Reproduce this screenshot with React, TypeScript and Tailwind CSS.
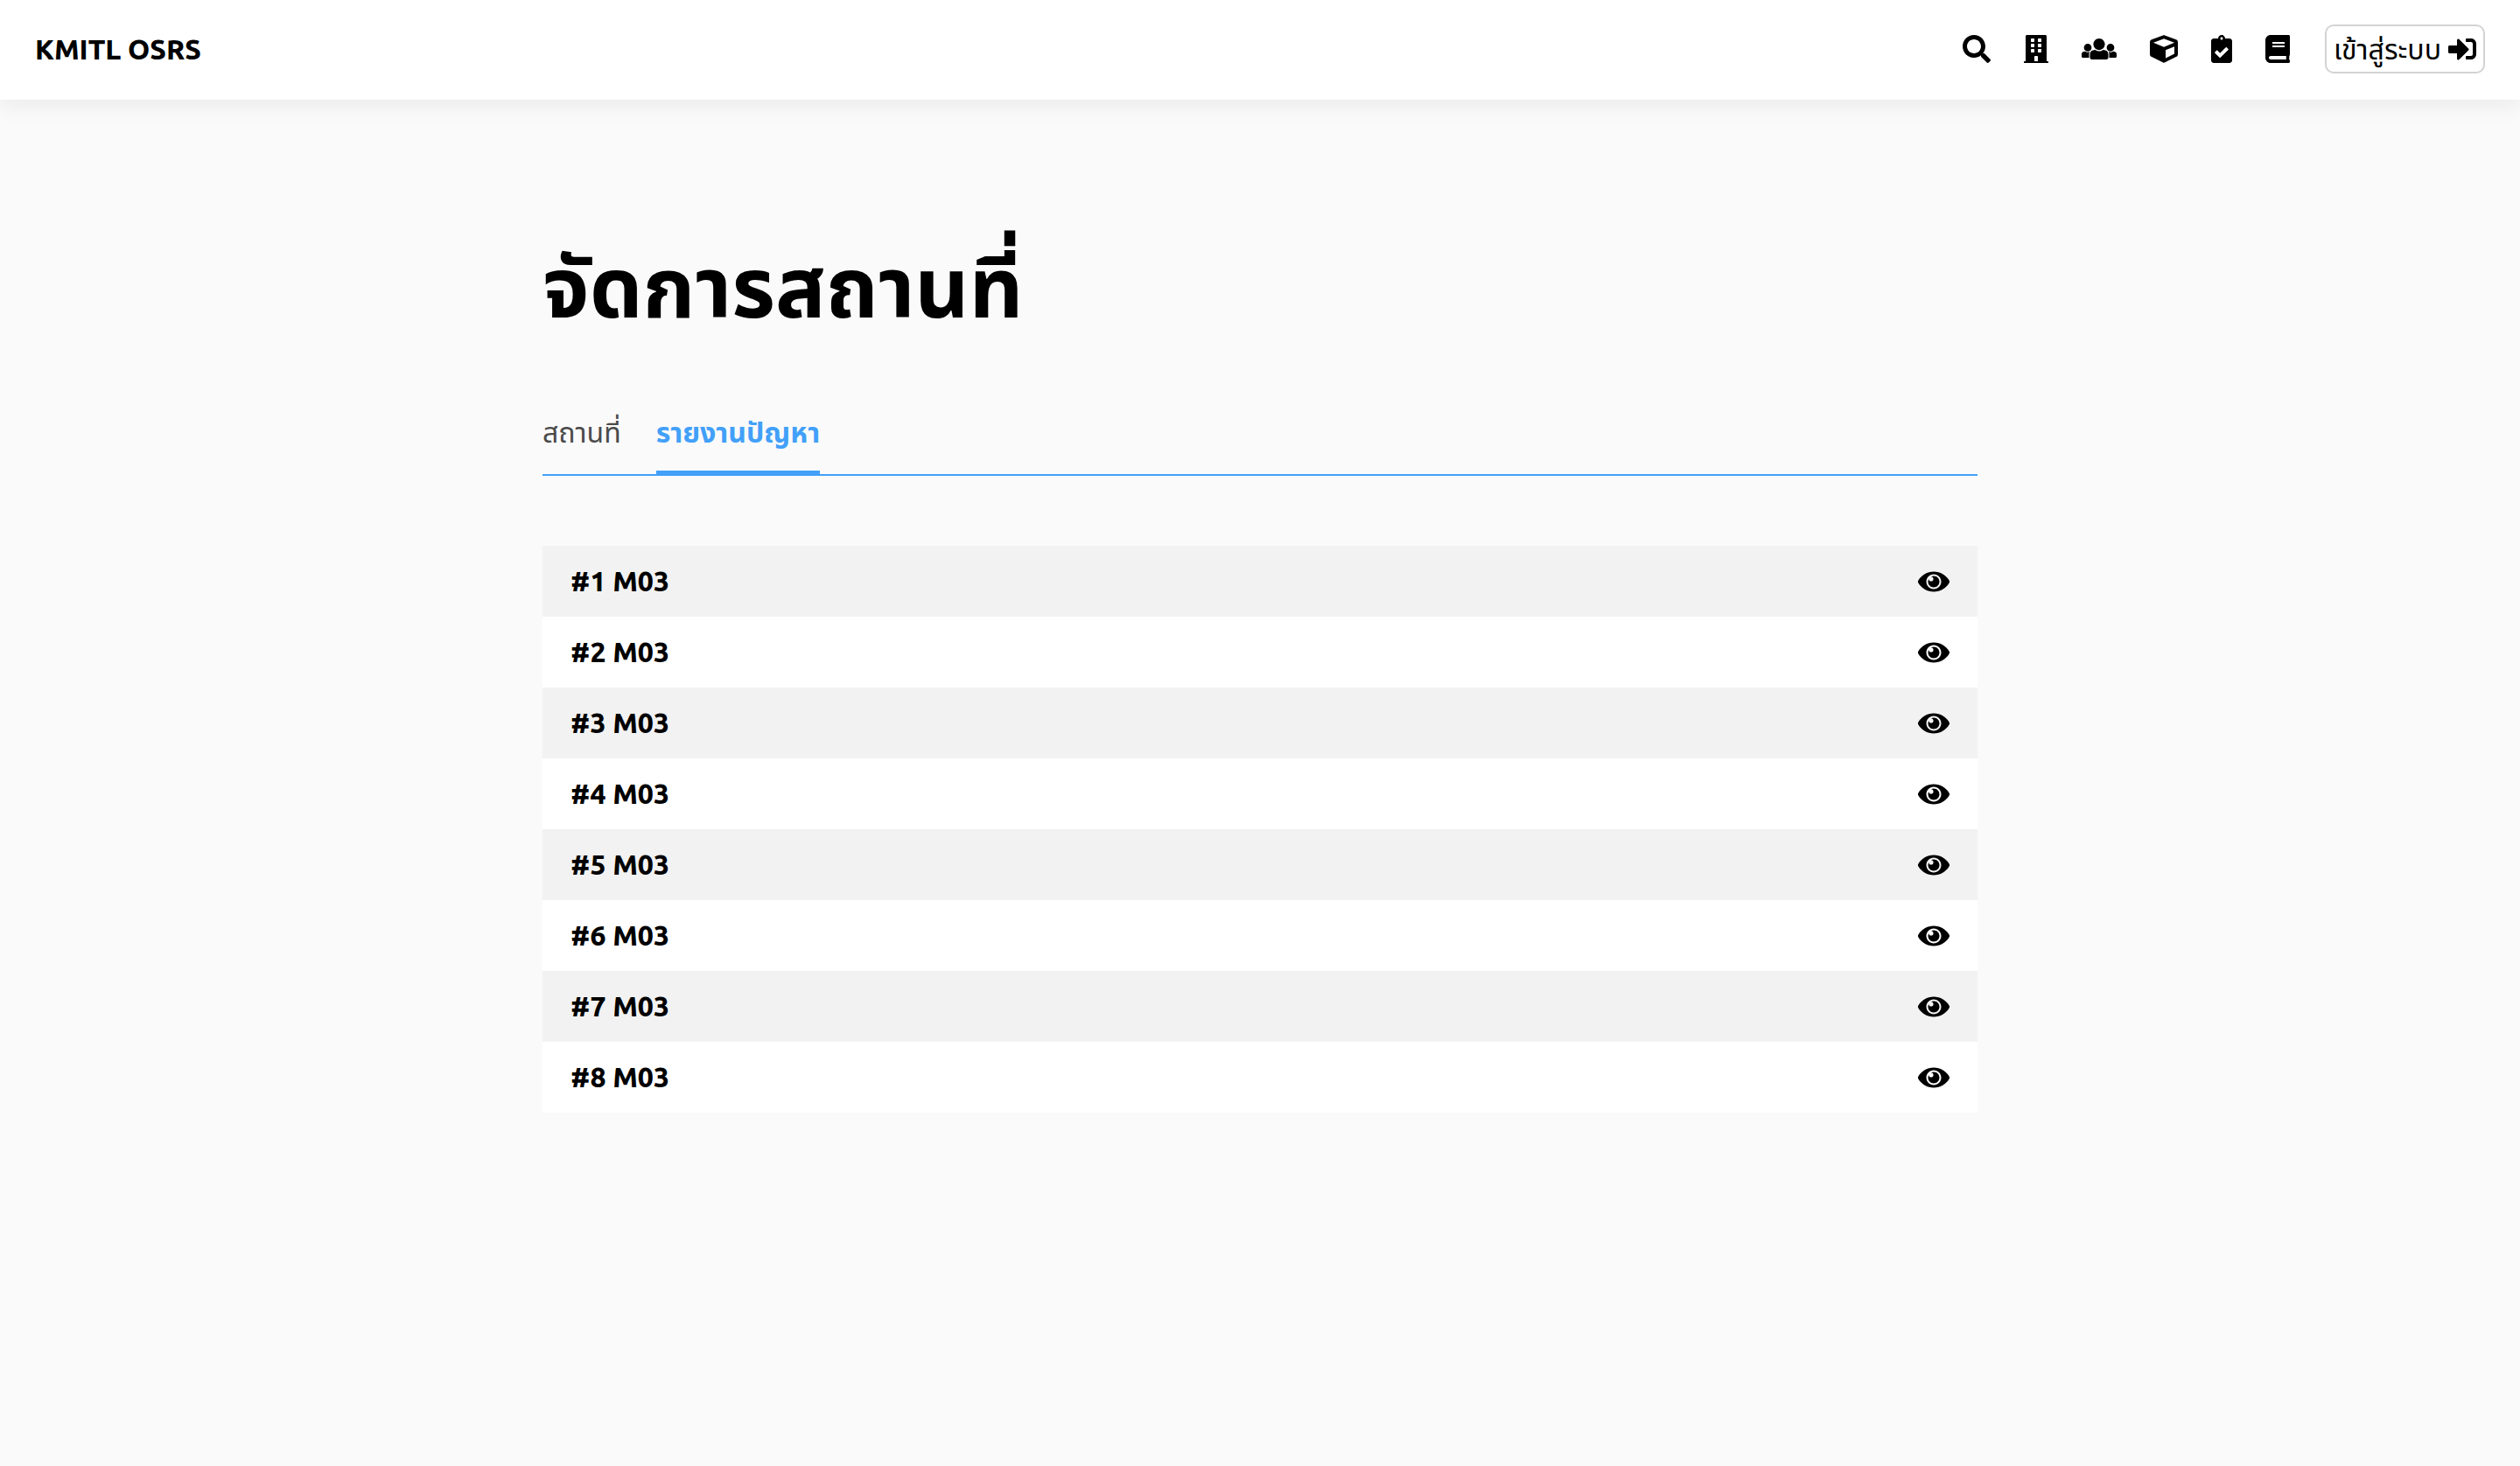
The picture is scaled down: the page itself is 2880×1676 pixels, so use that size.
import type { ReactNode } from "react";
import { FaBook, FaBuilding, FaClipboardCheck, FaCube, FaSearch, FaSignInAlt } from "react-icons/fa";

function UsersIcon() {
  return (
    <svg viewBox="0 0 640 512" className="h-8 w-10" fill="currentColor" aria-hidden="true">
      <path d="M320 64c57.99 0 105 47.01 105 105s-47.01 105-105 105-105-47.01-105-105S262.01 64 320 64zm113.463 217.366l-39.982-9.996c-49.168 35.365-108.766 27.473-146.961 0l-39.982 9.996C174.485 289.379 152 318.177 152 351.216V412c0 19.882 16.118 36 36 36h264c19.882 0 36-16.118 36-36v-60.784c0-33.039-22.485-61.837-54.537-69.85zM528 300c38.66 0 70-31.34 70-70s-31.34-70-70-70-70 31.34-70 70 31.34 70 70 70zm-416 0c38.66 0 70-31.34 70-70s-31.34-70-70-70-70 31.34-70 70 31.34 70 70 70zm24 112v-60.784c0-16.551 4.593-32.204 12.703-45.599-29.988 14.72-63.336 8.708-85.69-7.37l-26.655 6.664C14.99 310.252 0 329.452 0 351.477V392c0 13.255 10.745 24 24 24h112.169a52.417 52.417 0 0 1-.169-4zm467.642-107.09l-26.655-6.664c-27.925 20.086-60.89 19.233-85.304 7.21C499.405 318.944 504 334.637 504 351.216V412c0 1.347-.068 2.678-.169 4H616c13.255 0 24-10.745 24-24v-40.523c0-22.025-14.99-41.225-36.358-46.567z" />
    </svg>
  );
}

function EyeIcon() {
  return (
    <svg viewBox="0 0 576 512" className="h-8 w-9" fill="currentColor" aria-hidden="true">
      <path d="M569.354 231.631C512.969 135.949 407.81 72 288 72 168.14 72 63.004 135.994 6.646 231.631a47.999 47.999 0 0 0 0 48.739C63.031 376.051 168.19 440 288 440c119.86 0 224.996-63.994 281.354-159.631a47.997 47.997 0 0 0 0-48.738zM288 392c-75.162 0-136-60.827-136-136 0-75.162 60.826-136 136-136 75.162 0 136 60.826 136 136 0 75.162-60.826 136-136 136zm104-136c0 57.438-46.562 104-104 104s-104-46.562-104-104c0-17.708 4.431-34.379 12.236-48.973l-.001.032c0 23.651 19.173 42.823 42.824 42.823s42.824-19.173 42.824-42.823c0-23.651-19.173-42.824-42.824-42.824l-.032.001C253.621 156.431 270.292 152 288 152c57.438 0 104 46.562 104 104z" />
    </svg>
  );
}

const navItems: { label: string; icon: ReactNode }[] = [
  { label: "ค้นหา", icon: <FaSearch className="size-8" /> },
  { label: "สถานที่", icon: <FaBuilding className="h-8 w-7" /> },
  { label: "ผู้ใช้", icon: <UsersIcon /> },
  { label: "อุปกรณ์", icon: <FaCube className="size-8" /> },
  { label: "อนุมัติ", icon: <FaClipboardCheck className="h-8 w-6" /> },
  { label: "คู่มือ", icon: <FaBook className="h-8 w-7" /> },
];

const reports = [1, 2, 3, 4, 5, 6, 7, 8].map((id) => ({ id, place: "M03" }));

export default function App() {
  return (
    <div className="min-h-screen bg-[#fafafa] font-['Ubuntu','Noto_Sans_Thai','Noto_Sans',sans-serif] text-[32px] leading-[49px] text-black">
      <header className="flex items-center justify-between bg-white px-10 pt-7 pb-[30px] shadow-[0_10px_20px_rgba(0,0,0,0.05)]">
        <a href="#" className="font-extrabold">KMITL OSRS</a>
        <div className="flex items-center gap-10">
          <nav className="flex items-center gap-[38px]">
            {navItems.map((item) => (
              <a key={item.label} href="#" aria-label={item.label}>
                {item.icon}
              </a>
            ))}
          </nav>
          <button type="button" className="flex h-14 items-center gap-2 rounded-[10px] border-2 border-[#d3d3d3] px-2">
            เข้าสู่ระบบ
            <FaSignInAlt className="size-8" />
          </button>
        </div>
      </header>

      <main className="mx-auto max-w-[1640px] pt-[142px]">
        <h1 className="text-[96px] leading-[144px] font-bold">จัดการสถานที่</h1>
        <nav className="mt-[70px] flex gap-10 border-b-2 border-[#42a0f9]">
          <a href="#" className="pb-[23px] text-[#4a4a4a]">สถานที่</a>
          <a href="#" aria-current="page" className="-mb-0.5 border-b-6 border-[#42a0f9] pb-[19px] font-bold text-[#42a0f9]">
            รายงานปัญหา
          </a>
        </nav>
        <ul className="mt-20">
          {reports.map((report) => (
            <li key={report.id} className="flex items-center justify-between bg-white px-8 py-4 odd:bg-[#f2f2f2]">
              <span className="font-extrabold">#{report.id} {report.place}</span>
              <button type="button" aria-label={`ดูรายงาน #${report.id}`}>
                <EyeIcon />
              </button>
            </li>
          ))}
        </ul>
      </main>
    </div>
  );
}
